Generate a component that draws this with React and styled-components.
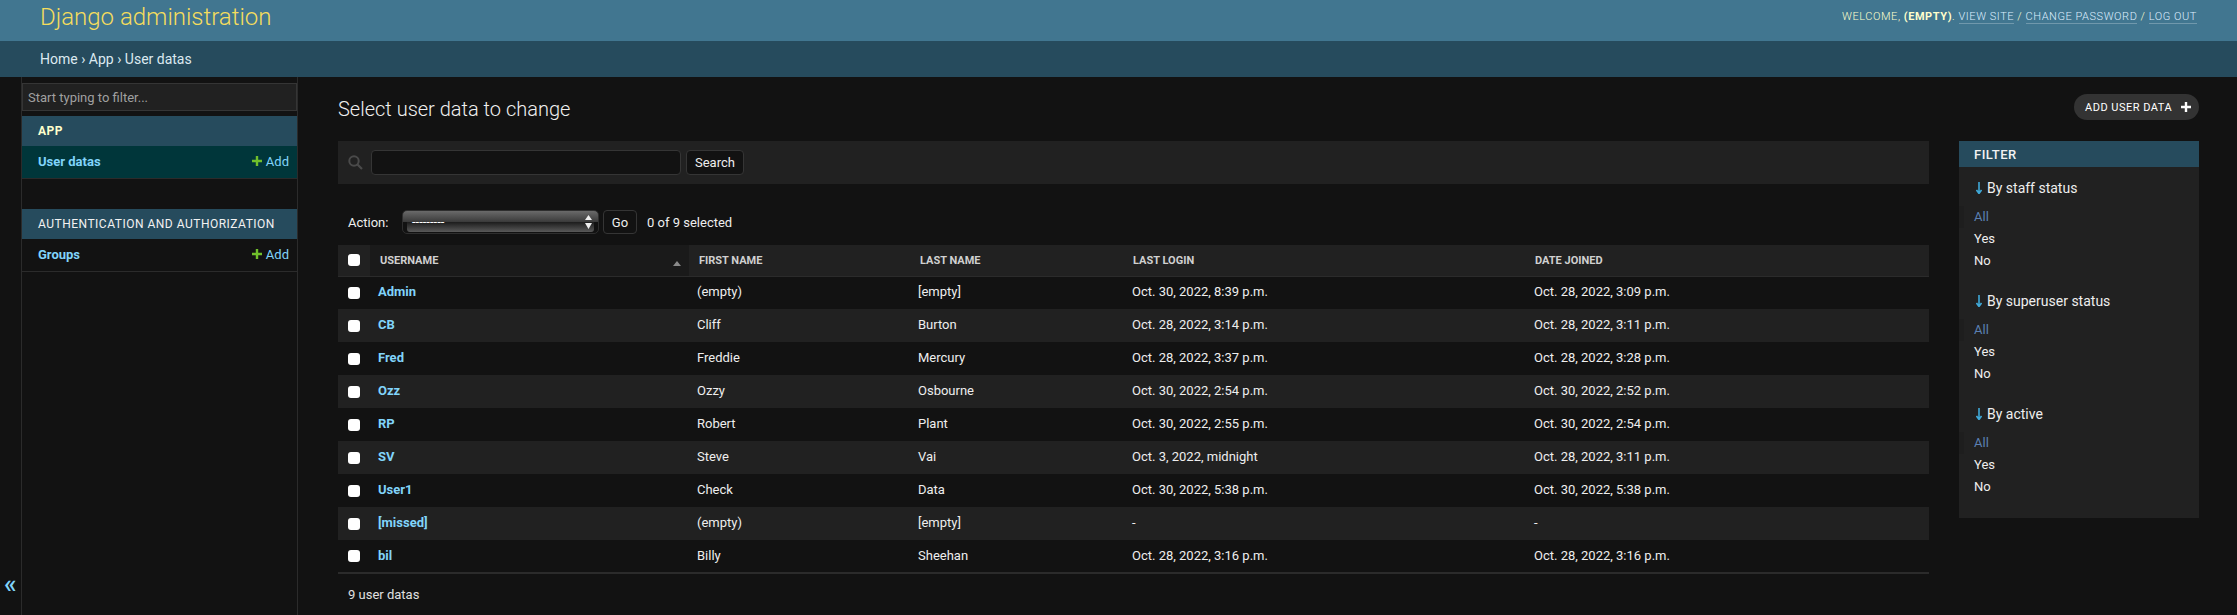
import React from 'react';
import styled, {createGlobalStyle} from 'styled-components';

const GlobalStyle = createGlobalStyle`
  html, body {
    margin: 0;
    padding: 0;
    background: #121212;
    color: #eeeeee;
    font-family: Roboto, "Liberation Sans", sans-serif;
    font-size: 13px;
  }
  * { box-sizing: border-box; }
`;

const Page = styled.div`
  width: 2237px;
  height: 615px;
  overflow: hidden;
  display: flex;
  flex-direction: column;
`;

const Header = styled.header`
  height: 41px;
  flex: none;
  background: #417690;
  display: flex;
  align-items: flex-start;
  justify-content: space-between;
  padding: 0 40px;
`;
const Brand = styled.h1`
  margin: 0;
  font-size: 24px;
  line-height: 34px;
  font-weight: 300;
  color: #f5dd5d;
`;
const UserTools = styled.div`
  font-size: 11px;
  font-weight: 300;
  line-height: 14px;
  letter-spacing: 0.55px;
  text-transform: uppercase;
  color: #ffffcc;
  padding-top: 10px;
  strong { font-weight: 700; }
`;
const ToolLink = styled.a`
  color: #ddeeff;
  border-bottom: 1px solid rgba(255, 255, 255, 0.25);
`;

const Breadcrumbs = styled.nav`
  height: 36px;
  flex: none;
  background: #264b5d;
  color: #dce9f0;
  padding: 0 40px;
  font-size: 14px;
  line-height: 36px;
`;

const Main = styled.div`
  flex: 1;
  display: flex;
  min-height: 0;
`;

const ToggleColumn = styled.div`
  width: 22px;
  flex: none;
  border-right: 1px solid #2b2b2b;
  color: #81d4fa;
  font-size: 26px;
  font-weight: 500;
  line-height: 20px;
  padding: 497px 0 0 4px;
`;

const Sidebar = styled.aside`
  width: 276px;
  flex: none;
  border-right: 1px solid #2b2b2b;
  padding-top: 6px;
`;
const NavFilter = styled.input`
  display: block;
  width: 100%;
  height: 28px;
  margin-bottom: 5px;
  padding: 0 5px;
  font: 13px Roboto, sans-serif;
  background: #212121;
  border: 1px solid #353535;
  color: #eeeeee;
  &::placeholder { color: #a0a0a0; opacity: 1; }
`;
const NavModule = styled.div`
  margin-bottom: ${p => p.$last ? 0 : 30}px;
`;
const NavCaption = styled.div`
  height: 30px;
  background: #264b5d;
  padding-left: 16px;
  font-size: 12px;
  line-height: 30px;
  letter-spacing: 0.5px;
  text-transform: uppercase;
  color: ${p => p.$current ? '#ffffcc' : '#f2f2f2'};
  font-weight: ${p => p.$current ? 700 : 400};
`;
const NavRow = styled.div`
  height: 33px;
  display: flex;
  align-items: center;
  justify-content: space-between;
  padding: 0 8px 2px 16px;
  border-bottom: 1px solid #2b2b2b;
  background: ${p => p.$current ? '#00363a' : 'transparent'};
`;
const NavLink = styled.a`
  color: #81d4fa;
  font-weight: 700;
`;
const AddLink = styled.a`
  display: flex;
  align-items: center;
  gap: 4px;
  color: #81d4fa;
`;

const Content = styled.main`
  flex: 1;
  min-width: 0;
  padding: 16px 38px 0 40px;
`;
const ContentHead = styled.div`
  display: flex;
  justify-content: space-between;
  align-items: flex-start;
  height: 48px;
`;
const Title = styled.h1`
  margin: 0;
  font-size: 20px;
  font-weight: 300;
  line-height: 32px;
  color: #f0f0f0;
`;
const AddButton = styled.a`
  width: 125px;
  height: 26px;
  margin-top: 1px;
  border-radius: 13px;
  background: #333333;
  display: flex;
  align-items: center;
  gap: 9px;
  padding-left: 11px;
  font-size: 11px;
  letter-spacing: 0.5px;
  color: #ffffff;
  text-transform: uppercase;
  white-space: nowrap;
`;

const Changelist = styled.div`
  display: flex;
  gap: 30px;
  align-items: flex-start;
`;
const Results = styled.div`
  flex: 1;
  min-width: 0;
`;
const Toolbar = styled.div`
  height: 43px;
  background: #212121;
  display: flex;
  align-items: center;
  padding: 0 10px;
`;
const SearchInput = styled.input`
  width: 310px;
  height: 25px;
  margin: 0 5px 0 8px;
  background: #121212;
  border: 1px solid #353535;
  border-radius: 4px;
`;
const PlainButton = styled.button`
  height: 25px;
  padding: 0 8px;
  background: #121212;
  border: 1px solid #353535;
  border-radius: 4px;
  color: #eeeeee;
  font: 13px Roboto, sans-serif;
`;
const Actions = styled.div`
  height: 24px;
  margin: 26px 0 11px;
  padding-left: 10px;
  display: flex;
  align-items: center;
`;
const ActionLabel = styled.span`
  width: 54px;
`;
const FakeSelect = styled.div`
  position: relative;
  width: 197px;
  height: 24px;
  margin-right: 4px;
  border: 1px solid #2e2e2e;
  border-radius: 5px;
  background: linear-gradient(#6a6a6a 0%, #3a3a3a 50%, #121212 50%);
  padding-left: 9px;
  color: #ffffff;
  font-size: 13px;
  line-height: 21px;
  &::after {
    content: '';
    position: absolute;
    left: 4px;
    right: 4px;
    top: 11px;
    bottom: 1px;
    border-radius: 0 0 3px 3px;
    background: linear-gradient(#1c1c1c, #5a5a5a);
  }
`;
const SelectText = styled.span`
  position: relative;
  z-index: 1;
`;
const SelectArrows = styled.svg`
  position: absolute;
  z-index: 1;
  right: 6px;
  top: 4px;
`;
const GoButton = styled(PlainButton)`
  width: 34px;
  height: 24px;
  padding: 0;
`;
const SelectedCount = styled.span`
  margin-left: 10px;
`;

const Table = styled.table`
  width: 100%;
  table-layout: fixed;
  border-collapse: collapse;
  border-bottom: 2px solid #2b2b2b;
`;
const Th = styled.th`
  position: relative;
  height: 31px;
  padding: 0 10px;
  background: ${p => p.$sorted ? '#1a1a1a' : '#212121'};
  border-bottom: 1px solid #2b2b2b;
  text-align: left;
  font-size: 11px;
  font-weight: 700;
  color: #d0d0d0;
  text-transform: uppercase;
`;
const SortArrow = styled.i`
  position: absolute;
  right: 8px;
  top: 16px;
  border-left: 4px solid transparent;
  border-right: 4px solid transparent;
  border-bottom: 5px solid #8a8a8a;
`;
const Tr = styled.tr`
  height: 33px;
  background: ${p => p.$alt ? '#212121' : '#121212'};
`;
const Td = styled.td`
  padding: 0 8px 2px ${p => p.$wide ? 9 : 8}px;
  font-size: 13px;
  color: #eeeeee;
`;
const CheckCell = styled(Td)`
  padding: 0 0 0 10px;
`;
const CheckHead = styled(Th)`
  padding: 0 0 0 10px;
`;
const Check = styled.input.attrs({type: 'checkbox'})`
  appearance: none;
  display: block;
  margin: 0;
  width: 12px;
  height: 12px;
  background: #ffffff;
  border-radius: 3px;
`;
const RowLink = styled.a`
  color: #81d4fa;
  font-weight: 700;
`;
const Paginator = styled.p`
  margin: 0;
  padding: 13px 10px 0;
  line-height: 16px;
  color: #e0e0e0;
`;

const FilterPanel = styled.aside`
  width: 240px;
  flex: none;
  height: 377px;
  background: #212121;
`;
const FilterTitle = styled.h2`
  margin: 0 0 10px;
  height: 26px;
  background: #264b5d;
  padding-left: 15px;
  font-size: 13px;
  font-weight: 500;
  line-height: 28px;
  letter-spacing: 0.5px;
  color: #f2f2f2;
  text-transform: uppercase;
`;
const FilterGroup = styled.div`
  margin-bottom: 18px;
`;
const FilterHeading = styled.h3`
  display: flex;
  align-items: center;
  gap: 5px;
  margin: 0 0 7px;
  padding-left: 17px;
  height: 22px;
  font-size: 14px;
  font-weight: 400;
  color: #eeeeee;
`;
const FilterItem = styled.div`
  height: 22px;
  padding-left: 15px;
  font-size: 13px;
  line-height: 22px;
  color: ${p => p.$selected ? '#5b80b2' : '#eeeeee'};
  ${p => p.$selected ? 'box-shadow: inset 5px 0 0 #1e1e1e;' : ''}
`;

const Plus = ({size = 10, color}) => (
  <svg width={size} height={size} viewBox="0 0 10 10">
    <path d="M3.8 0h2.4v3.8H10v2.4H6.2V10H3.8V6.2H0V3.8h3.8z" fill={color}/>
  </svg>
);

const DownArrow = () => (
  <svg width="6" height="12" viewBox="0 0 6 12">
    <path d="M3 0v11M0.5 8L3 11.5 5.5 8" stroke="#3fa9d8" strokeWidth="1.6" fill="none"/>
  </svg>
);

const SearchIcon = () => (
  <svg width="15" height="15" viewBox="0 0 15 15">
    <circle cx="6" cy="6" r="4.7" stroke="#4a4a4a" strokeWidth="2" fill="none"/>
    <path d="M9.5 9.5L14 14" stroke="#4a4a4a" strokeWidth="2.2"/>
  </svg>
);

const users = [
  ['Admin', '(empty)', '[empty]', 'Oct. 30, 2022, 8:39 p.m.', 'Oct. 28, 2022, 3:09 p.m.'],
  ['CB', 'Cliff', 'Burton', 'Oct. 28, 2022, 3:14 p.m.', 'Oct. 28, 2022, 3:11 p.m.'],
  ['Fred', 'Freddie', 'Mercury', 'Oct. 28, 2022, 3:37 p.m.', 'Oct. 28, 2022, 3:28 p.m.'],
  ['Ozz', 'Ozzy', 'Osbourne', 'Oct. 30, 2022, 2:54 p.m.', 'Oct. 30, 2022, 2:52 p.m.'],
  ['RP', 'Robert', 'Plant', 'Oct. 30, 2022, 2:55 p.m.', 'Oct. 30, 2022, 2:54 p.m.'],
  ['SV', 'Steve', 'Vai', 'Oct. 3, 2022, midnight', 'Oct. 28, 2022, 3:11 p.m.'],
  ['User1', 'Check', 'Data', 'Oct. 30, 2022, 5:38 p.m.', 'Oct. 30, 2022, 5:38 p.m.'],
  ['[missed]', '(empty)', '[empty]', '-', '-'],
  ['bil', 'Billy', 'Sheehan', 'Oct. 28, 2022, 3:16 p.m.', 'Oct. 28, 2022, 3:16 p.m.']
];

const columnWidths = [32, 319, 221, 213, 402, 404];
const filters = ['By staff status', 'By superuser status', 'By active'];

const App = () => (<Page>
  <GlobalStyle/>
  <Header>
    <Brand>Django administration</Brand>
    <UserTools>
      Welcome, <strong>(empty)</strong>. <ToolLink>View site</ToolLink> / <ToolLink>Change password</ToolLink> / <ToolLink>Log out</ToolLink>
    </UserTools>
  </Header>
  <Breadcrumbs>Home › App › User datas</Breadcrumbs>
  <Main>
    <ToggleColumn>«</ToggleColumn>
    <Sidebar>
      <NavFilter placeholder="Start typing to filter..."/>
      <NavModule>
        <NavCaption $current>App</NavCaption>
        <NavRow $current>
          <NavLink>User datas</NavLink>
          <AddLink><Plus color="#70bf2b"/>Add</AddLink>
        </NavRow>
      </NavModule>
      <NavModule $last>
        <NavCaption>Authentication and Authorization</NavCaption>
        <NavRow>
          <NavLink>Groups</NavLink>
          <AddLink><Plus color="#70bf2b"/>Add</AddLink>
        </NavRow>
      </NavModule>
    </Sidebar>
    <Content>
      <ContentHead>
        <Title>Select user data to change</Title>
        <AddButton>Add user data<Plus color="#ffffff"/></AddButton>
      </ContentHead>
      <Changelist>
        <Results>
          <Toolbar>
            <SearchIcon/>
            <SearchInput/>
            <PlainButton>Search</PlainButton>
          </Toolbar>
          <Actions>
            <ActionLabel>Action:</ActionLabel>
            <FakeSelect>
              <SelectText>---------</SelectText>
              <SelectArrows width="7" height="14" viewBox="0 0 7 14">
                <path d="M3.5 0L7 5H0zM0 8h7L3.5 14z" fill="#eeeeee"/>
              </SelectArrows>
            </FakeSelect>
            <GoButton>Go</GoButton>
            <SelectedCount>0 of 9 selected</SelectedCount>
          </Actions>
          <Table>
            <colgroup>
              {columnWidths.map(w => <col key={w} width={w}/>)}
            </colgroup>
            <thead>
              <tr>
                <CheckHead><Check/></CheckHead>
                <Th $sorted>Username<SortArrow/></Th>
                <Th>First name</Th>
                <Th>Last name</Th>
                <Th>Last login</Th>
                <Th>Date joined</Th>
              </tr>
            </thead>
            <tbody>
              {users.map((u, i) => (
                <Tr key={u[0]} $alt={i % 2 === 1}>
                  <CheckCell><Check/></CheckCell>
                  <Td><RowLink>{u[0]}</RowLink></Td>
                  <Td>{u[1]}</Td>
                  <Td>{u[2]}</Td>
                  <Td $wide>{u[3]}</Td>
                  <Td $wide>{u[4]}</Td>
                </Tr>
              ))}
            </tbody>
          </Table>
          <Paginator>9 user datas</Paginator>
        </Results>
        <FilterPanel>
          <FilterTitle>Filter</FilterTitle>
          {filters.map(name => (
            <FilterGroup key={name}>
              <FilterHeading><DownArrow/>{name}</FilterHeading>
              <FilterItem $selected>All</FilterItem>
              <FilterItem>Yes</FilterItem>
              <FilterItem>No</FilterItem>
            </FilterGroup>
          ))}
        </FilterPanel>
      </Changelist>
    </Content>
  </Main>
</Page>);

export default App;
